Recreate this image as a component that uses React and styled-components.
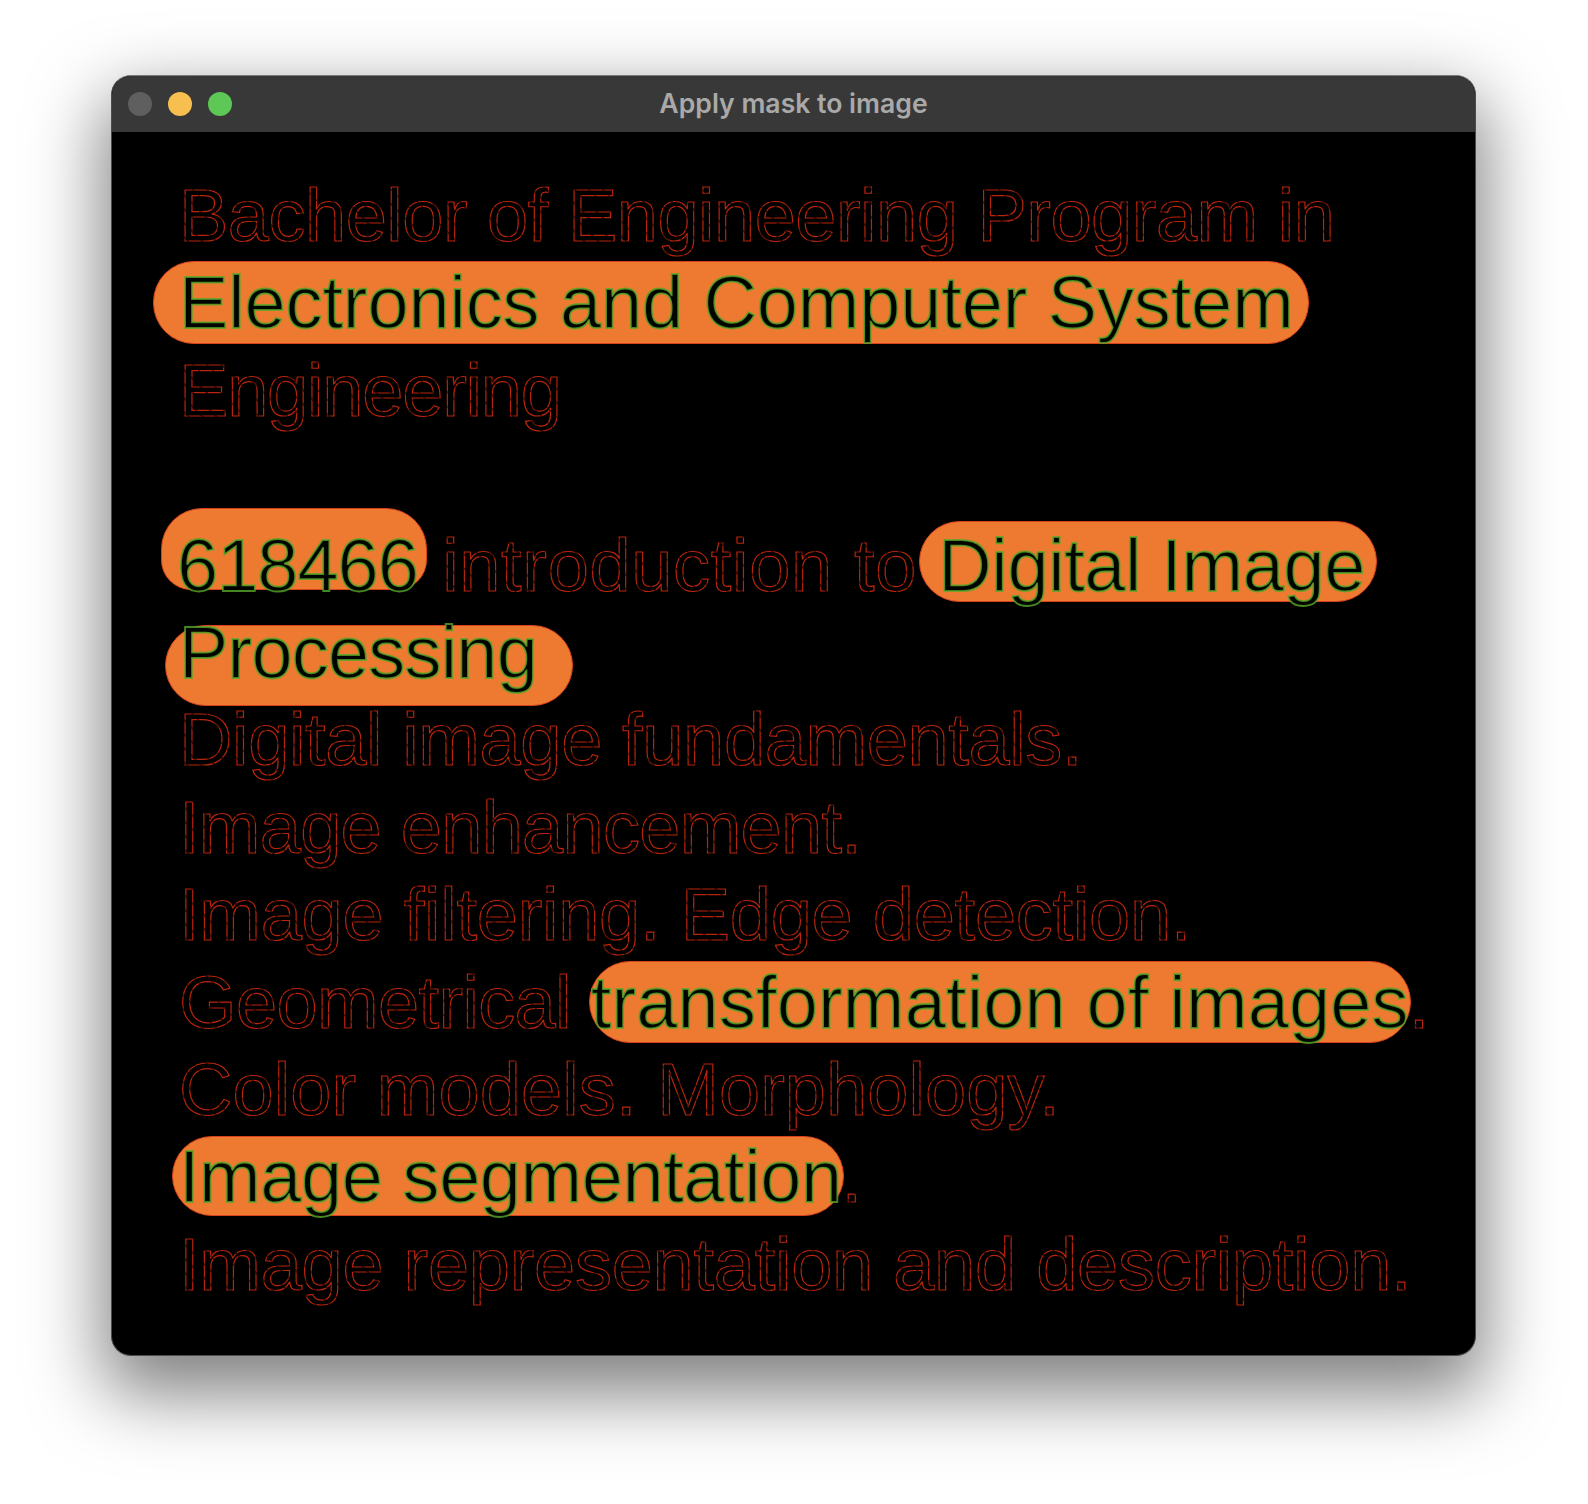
import React from 'react';
import styled, {createGlobalStyle} from 'styled-components';

const GlobalStyle = createGlobalStyle`
    html, body {
        margin: 0;
        background: #fff;
    }
`;

const Page = styled.div`
    width: 1588px;
    height: 1504px;
    padding: 75px 111px 0;
    box-sizing: border-box;
    overflow: hidden;
    font-family: "Liberation Sans", Arial, sans-serif;
`;

const Window = styled.div`
    width: 1365px;
    height: 1281px;
    box-sizing: border-box;
    border: 1px solid #4c4c4c;
    border-top-color: #7a7a7a;
    border-radius: 20px;
    background: #000;
    box-shadow: 0 30px 72px 8px rgba(0, 0, 0, 0.5);
    overflow: hidden;
`;

const TitleBar = styled.div`
    position: relative;
    display: flex;
    align-items: center;
    justify-content: center;
    height: 56px;
    padding-bottom: 2px;
    box-sizing: border-box;
    background: #383838;
`;

const Lights = styled.div`
    position: absolute;
    left: 16px;
    top: 16px;
    display: flex;
    gap: 16px;
`;

const Light = styled.span`
    width: 24px;
    height: 24px;
    border-radius: 50%;
    background: ${props => props.$color};
`;

const Title = styled.div`
    color: #a9a9a9;
    font-size: 26.6px;
    font-weight: 600;
    font-family: Inter, "Liberation Sans", sans-serif;
`;

const Canvas = styled.div`
    padding: 40px 0 0 67px;
    font-size: 74px;
    line-height: 87.4px;
    white-space: pre;
    isolation: isolate;
    filter: blur(0.3px);
`;

const Line = styled.div`
    height: 87.4px;
`;

const Outline = styled.span`
    display: inline-block;
    margin-left: ${props => props.$shift || 0}px;
    letter-spacing: ${props => props.$track || 0}px;
    color: transparent;
    -webkit-text-stroke: 1.2px #b8240c;
    mask-image: repeating-linear-gradient(45deg, #000 0 8px, rgba(0, 0, 0, 0.5) 8px 10px);
`;

const Highlight = styled.span`
    position: relative;
    display: inline-block;
    z-index: 0;
    margin-left: ${props => props.$shift || 0}px;
    letter-spacing: ${props => props.$track || 0}px;
    color: #020400;
    -webkit-text-stroke: 1.8px rgba(88, 168, 40, 0.8);

    &::before {
        content: "";
        position: absolute;
        z-index: -1;
        left: ${props => props.$l}px;
        right: ${props => props.$r}px;
        top: ${props => props.$t}px;
        bottom: ${props => props.$b}px;
        background: #ee7a32;
        border: 1px solid #d9421c;
        box-sizing: border-box;
        border-radius: ${props => props.$radius || '41px'};
    }
`;

function App() {
    return (
        <Page>
            <GlobalStyle/>
            <Window>
                <TitleBar>
                    <Lights>
                        <Light $color="#5f5f5f"/>
                        <Light $color="#f6bf4f"/>
                        <Light $color="#5dc856"/>
                    </Lights>
                    <Title>Apply mask to image</Title>
                </TitleBar>
                <Canvas>
                    <Line><Outline $track={-0.5}>Bachelor of Engineering Program in</Outline></Line>
                    <Line>
                        <Highlight $track={-0.13} $l={-26} $r={-15} $t={2} $b={3}>Electronics and Computer System</Highlight>
                    </Line>
                    <Line><Outline $track={-1.2}>Engineering</Outline></Line>
                    <Line/>
                    <Line>
                        <Highlight $shift={-2} $track={-1} $l={-16} $r={-9} $t={-14} $b={19} $radius="41px 41px 30px 30px">618466</Highlight>
                        <Outline $shift={3} $track={0.67}>{' introduction to '}</Outline>
                        <Highlight $track={-0.4} $l={-19} $r={-12} $t={-1} $b={7}>Digital Image</Highlight>
                    </Line>
                    <Line>
                        <Highlight $track={-0.8} $l={-14} $r={-36} $t={16} $b={-10}>Processing</Highlight>
                    </Line>
                    <Line><Outline $track={-0.37}>Digital image fundamentals.</Outline></Line>
                    <Line><Outline $track={-0.73}>Image enhancement.</Outline></Line>
                    <Line><Outline $track={-0.25}>Image filtering. Edge detection.</Outline></Line>
                    <Line>
                        <Outline $track={-0.64}>{'Geometrical '}</Outline>
                        <Highlight $track={0.15} $l={-2} $r={-2} $t={2} $b={3}>transformation of images</Highlight>
                        <Outline>.</Outline>
                    </Line>
                    <Line><Outline $track={0.08}>Color models. Morphology.</Outline></Line>
                    <Line>
                        <Highlight $track={-0.44} $l={-7} $r={-2} $t={3} $b={5}>Image segmentation</Highlight>
                        <Outline>.</Outline>
                    </Line>
                    <Line><Outline $track={-0.27}>Image representation and description.</Outline></Line>
                </Canvas>
            </Window>
        </Page>
    );
}

export default App;
